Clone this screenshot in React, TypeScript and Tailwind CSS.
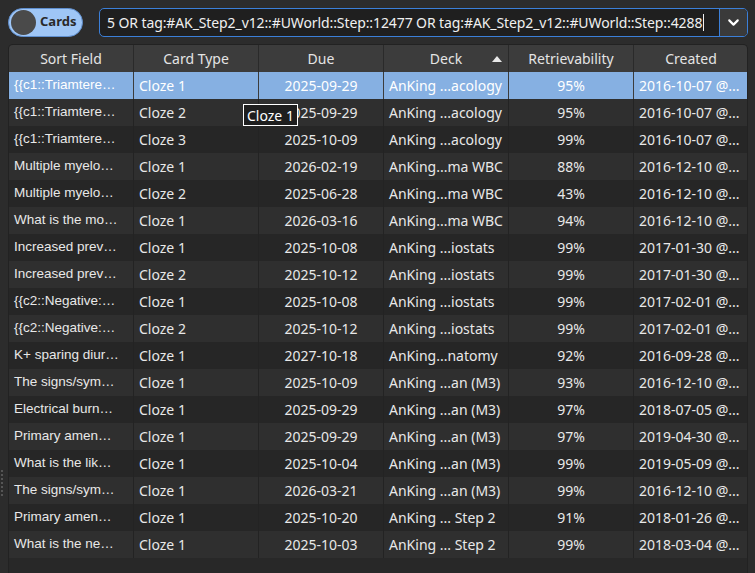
import { ChevronDown } from 'lucide-react';

type Row = {
  sort: string;
  type: string;
  due: string;
  deck: string;
  ret: string;
  created: string;
};

const ROWS: Row[] = [
  { sort: '{{c1::Triamtere…', type: 'Cloze 1', due: '2025-09-29', deck: 'AnKing ...acology', ret: '95%', created: '2016-10-07 @...' },
  { sort: '{{c1::Triamtere…', type: 'Cloze 2', due: '2025-09-29', deck: 'AnKing ...acology', ret: '95%', created: '2016-10-07 @...' },
  { sort: '{{c1::Triamtere…', type: 'Cloze 3', due: '2025-10-09', deck: 'AnKing ...acology', ret: '99%', created: '2016-10-07 @...' },
  { sort: 'Multiple myelo…', type: 'Cloze 1', due: '2026-02-19', deck: 'AnKing...ma WBC', ret: '88%', created: '2016-12-10 @...' },
  { sort: 'Multiple myelo…', type: 'Cloze 2', due: '2025-06-28', deck: 'AnKing...ma WBC', ret: '43%', created: '2016-12-10 @...' },
  { sort: 'What is the mo…', type: 'Cloze 1', due: '2026-03-16', deck: 'AnKing...ma WBC', ret: '94%', created: '2016-12-10 @...' },
  { sort: 'Increased prev…', type: 'Cloze 1', due: '2025-10-08', deck: 'AnKing ...iostats', ret: '99%', created: '2017-01-30 @...' },
  { sort: 'Increased prev…', type: 'Cloze 2', due: '2025-10-12', deck: 'AnKing ...iostats', ret: '99%', created: '2017-01-30 @...' },
  { sort: '{{c2::Negative:…', type: 'Cloze 1', due: '2025-10-08', deck: 'AnKing ...iostats', ret: '99%', created: '2017-02-01 @...' },
  { sort: '{{c2::Negative:…', type: 'Cloze 2', due: '2025-10-12', deck: 'AnKing ...iostats', ret: '99%', created: '2017-02-01 @...' },
  { sort: 'K+ sparing diur…', type: 'Cloze 1', due: '2027-10-18', deck: 'AnKing...natomy', ret: '92%', created: '2016-09-28 @...' },
  { sort: 'The signs/sym…', type: 'Cloze 1', due: '2025-10-09', deck: 'AnKing ...an (M3)', ret: '93%', created: '2016-12-10 @...' },
  { sort: 'Electrical burn…', type: 'Cloze 1', due: '2025-09-29', deck: 'AnKing ...an (M3)', ret: '97%', created: '2018-07-05 @...' },
  { sort: 'Primary amen…', type: 'Cloze 1', due: '2025-09-29', deck: 'AnKing ...an (M3)', ret: '97%', created: '2019-04-30 @...' },
  { sort: 'What is the lik…', type: 'Cloze 1', due: '2025-10-04', deck: 'AnKing ...an (M3)', ret: '99%', created: '2019-05-09 @...' },
  { sort: 'The signs/sym…', type: 'Cloze 1', due: '2026-03-21', deck: 'AnKing ...an (M3)', ret: '99%', created: '2016-12-10 @...' },
  { sort: 'Primary amen…', type: 'Cloze 1', due: '2025-10-20', deck: 'AnKing ... Step 2', ret: '91%', created: '2018-01-26 @...' },
  { sort: 'What is the ne…', type: 'Cloze 1', due: '2025-10-03', deck: 'AnKing ... Step 2', ret: '99%', created: '2018-03-04 @...' },
];

const COLS = 'grid grid-cols-[125px_125px_125px_125px_125px_114px]';

export default function App() {
  return (
    <div className="w-[755px] h-[573px] overflow-hidden bg-[#2c2c2c] text-[#e8e8e8] font-['Segoe_UI','Noto_Sans',sans-serif] text-[14px] relative">
      {/* toolbar */}
      <div className="flex items-center h-[44px] pl-[8px] pr-[7px] gap-[16px]">
        <div className="flex items-center w-[75px] h-[29px] rounded-full bg-[#9fc6f6] border border-[#5f8fcf] pl-[2px] gap-[4px]">
          <div className="w-[25px] h-[25px] rounded-full bg-[#4a4a4a]" />
          <span className="text-[13px] font-bold text-[#2a2a2a]">Cards</span>
        </div>
        <div className="flex flex-1 h-[29px] rounded-[5px] border border-[#3b7fd8] bg-[#1f1f1f] overflow-hidden">
          <div className="flex-1 flex items-center pl-[7px] overflow-hidden whitespace-nowrap text-[14px] text-[#f0f0f0] tracking-[-0.1px]">
            <span>5 OR tag:#AK_Step2_v12::#UWorld::Step::12477 OR tag:#AK_Step2_v12::#UWorld::Step::4288</span>
            <span className="w-px h-[17px] bg-[#f0f0f0] ml-[1px]" />
          </div>
          <div className="w-[28px] border-l border-[#3b7fd8] bg-[#3a3a3a] flex items-center justify-center">
            <ChevronDown size={17} strokeWidth={3} className="text-white" />
          </div>
        </div>
      </div>

      {/* table */}
      <div className="ml-[8px] w-[740px] h-[529px] rounded-t-[5px] overflow-hidden bg-[#282828] border-t border-x border-[#222]">
        <div className={`${COLS} h-[27px] bg-[#3c3c3c] text-[#e4e4e4]`}>
          {['Sort Field', 'Card Type', 'Due', 'Deck', 'Retrievability', 'Created'].map((h, i) => (
            <div key={h} className={`relative flex items-center justify-center ${i < 5 ? 'border-r border-[#2a2a2a]' : ''}`}>
              {h}
              {h === 'Deck' && (
                <span className="absolute right-[6px] top-[11px] w-0 h-0 border-l-[5px] border-r-[5px] border-b-[6px] border-l-transparent border-r-transparent border-b-[#e8e8e8]" />
              )}
            </div>
          ))}
        </div>
        {ROWS.map((r, i) => {
          const selected = i === 0;
          const bg = selected ? 'bg-[#86b0e2] text-white' : i % 2 === 1 ? 'bg-[#2f2f2f]' : 'bg-[#262626]';
          const sep = selected ? 'border-r border-[#3c3c3c]' : 'border-r border-[#232323]';
          return (
            <div key={i} className={`${COLS} h-[27px] ${bg} whitespace-nowrap`}>
              <div className={`flex items-center pl-[5px] text-[13.5px] font-['Liberation_Sans',Arial,sans-serif] ${sep}`}>{r.sort}</div>
              <div className={`flex items-center pl-[5px] ${sep}`}>{r.type}</div>
              <div className={`flex items-center justify-center ${sep}`}>{r.due}</div>
              <div className={`flex items-center pl-[5px] ${sep}`}>{r.deck}</div>
              <div className={`flex items-center justify-center ${sep}`}>{r.ret}</div>
              <div className="flex items-center pl-[5px]">{r.created}</div>
            </div>
          );
        })}
      </div>

      {/* splitter grip */}
      <div className="absolute left-[1px] top-[470px] flex flex-col gap-[2px]">
        {[0, 1, 2, 3, 4, 5, 6].map((d) => (
          <span key={d} className="w-[2px] h-[2px] bg-[#555]" />
        ))}
      </div>

      {/* tooltip */}
      <div className="absolute left-[243px] top-[104px] h-[22px] px-[3px] flex items-center bg-[#1e1e1e] border border-white text-white">
        Cloze 1
      </div>
    </div>
  );
}
